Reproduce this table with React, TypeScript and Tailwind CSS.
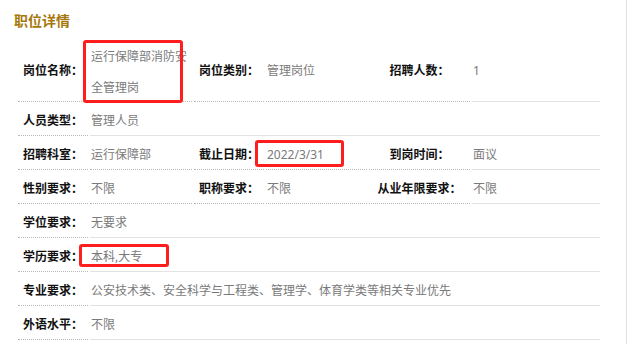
import React from "react";

type Cell = { label: string; value: string };

const rows: Cell[][] = [
  [
    { label: "人员类型：", value: "管理人员" },
  ],
  [
    { label: "招聘科室：", value: "运行保障部" },
    { label: "截止日期：", value: "2022/3/31" },
    { label: "到岗时间：", value: "面议" },
  ],
  [
    { label: "性别要求：", value: "不限" },
    { label: "职称要求：", value: "不限" },
    { label: "从业年限要求：", value: "不限" },
  ],
  [{ label: "学位要求：", value: "无要求" }],
  [{ label: "学历要求：", value: "本科,大专" }],
  [{ label: "专业要求：", value: "公安技术类、安全科学与工程类、管理学、体育学类等相关专业优先" }],
  [{ label: "外语水平：", value: "不限" }],
];

const labelCls =
  "h-[32px] flex items-center justify-center pt-[2px] font-bold text-[12px] text-[#111] border-b border-dotted border-[#b8b8b8] whitespace-nowrap";
const valueCls = "h-[32px] flex items-center pt-[2px] pl-[1px] text-[12px] text-[#7a7a7a] whitespace-nowrap";

function Label({ text, tall }: { text: string; tall?: boolean }) {
  if (tall) {
    return (
      <div className="h-[66px] flex items-center justify-center pt-[5px] font-bold text-[12px] text-[#111] border-b border-dotted border-[#b8b8b8] whitespace-nowrap">
        {text}
      </div>
    );
  }
  return <div className={labelCls}>{text}</div>;
}

export default function App() {
  return (
    <div className="relative w-[627px] h-[344px] overflow-hidden bg-white border-r border-[#e2e2e2] font-['Noto_Sans','Noto_Sans_CJK_SC',sans-serif]">
      <h2 className="mt-[11px] pl-[14px] text-[14px] leading-[20px] font-bold text-[#a6780c]">职位详情</h2>

      <div className="mt-[5px] ml-[18px] grid grid-cols-[70px_102px_70px_101px_101px_128px] gap-x-[2px] gap-y-[2px]">
        <Label text="岗位名称：" tall />
        <div className="h-[66px] pt-[5px] pl-[1px] text-[12px] leading-[31px] text-[#7a7a7a] border-b border-dotted border-[#b8b8b8]">
          运行保障部消防安全管理岗
        </div>
        <Label text="岗位类别：" tall />
        <div className="h-[66px] flex items-center pt-[5px] pl-[1px] text-[12px] text-[#7a7a7a] border-b border-dotted border-[#b8b8b8]">
          管理岗位
        </div>
        <Label text="招聘人数：" tall />
        <div className="h-[66px] flex items-center pt-[5px] pl-[1px] text-[12px] text-[#7a7a7a] border-b border-solid border-[#e3e3e3]">
          1
        </div>

        {rows.map((row, i) =>
          row.length === 1 ? (
            <React.Fragment key={i}>
              <Label text={row[0].label} />
              <div className={`${valueCls} col-span-5 border-b border-solid border-[#e3e3e3]`}>{row[0].value}</div>
            </React.Fragment>
          ) : (
            <React.Fragment key={i}>
              {row.map((c, j) => (
                <React.Fragment key={j}>
                  <Label text={c.label} />
                  <div
                    className={
                      j === row.length - 1
                        ? `${valueCls} border-b border-solid border-[#e3e3e3]`
                        : `${valueCls} border-b border-dotted border-[#b8b8b8]`
                    }
                  >
                    {c.value}
                  </div>
                </React.Fragment>
              ))}
            </React.Fragment>
          )
        )}
      </div>

      {/* red highlight boxes */}
      <div className="absolute left-[83px] top-[40px] w-[100px] h-[63px] border-[3px] border-[#ff1e1e] rounded-[3px]" />
      <div className="absolute left-[255px] top-[140px] w-[89px] h-[27px] border-[3px] border-[#ff1e1e] rounded-[3px]" />
      <div className="absolute left-[79px] top-[244px] w-[90px] h-[23px] border-[3px] border-[#ff1e1e] rounded-[3px]" />
    </div>
  );
}
